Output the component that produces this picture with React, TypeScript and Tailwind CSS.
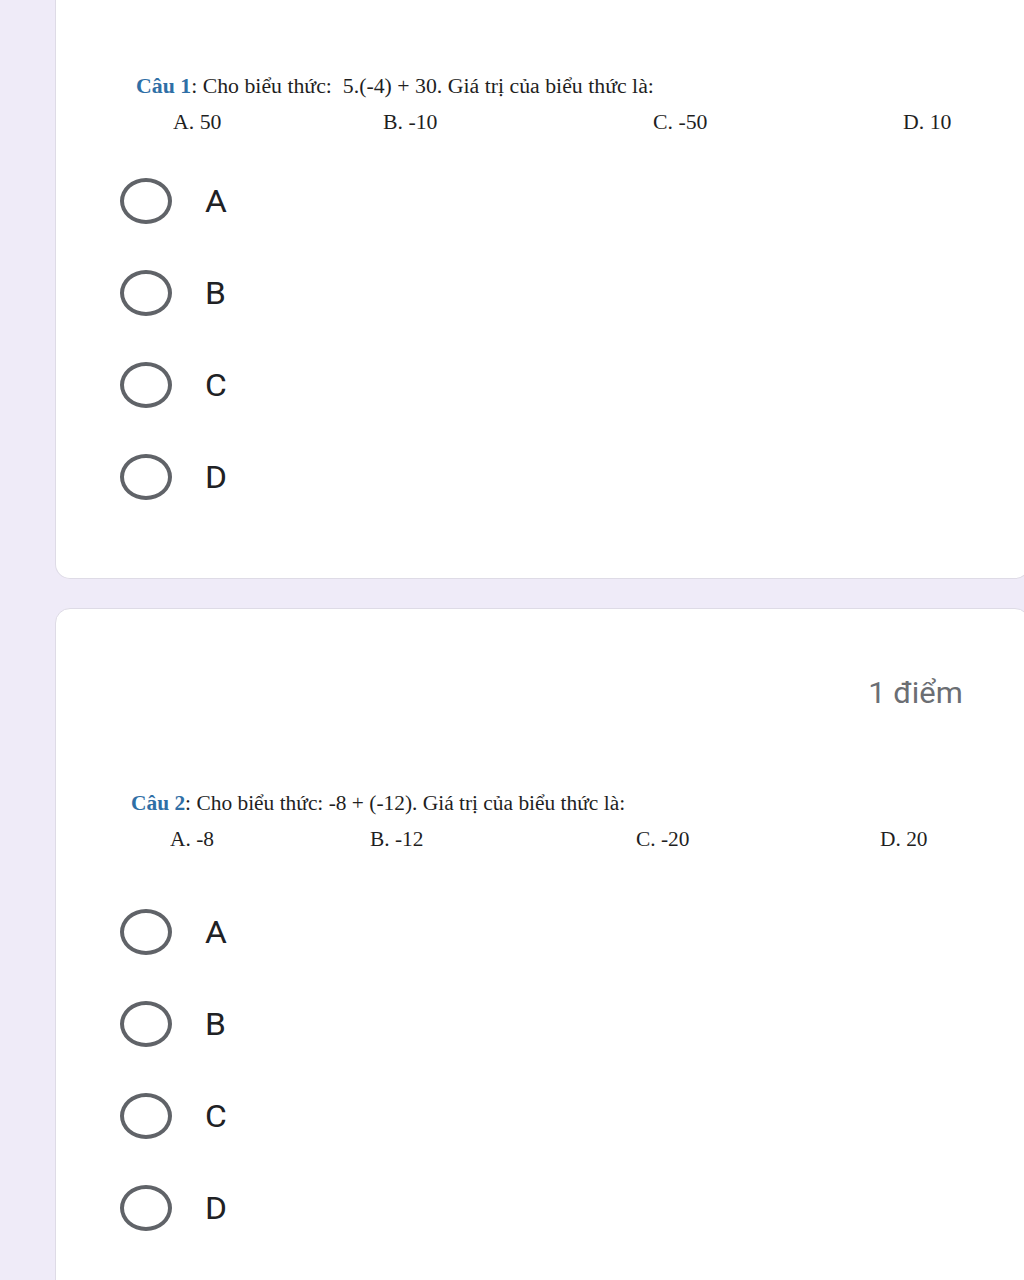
import React from "react";

const serif = "font-['Liberation_Serif','Times_New_Roman',serif]";

function Radio({ label }: { label: string }) {
  return (
    <div className="flex items-center h-[46px] pl-[64px]">
      <div className="w-[52px] h-[46px] rounded-[50%] border-[4px] border-[#606368] box-border" />
      <span className="ml-[33px] text-[31px] leading-none text-[#202124] font-['Roboto',sans-serif] origin-left scale-x-[1.08]">{label}</span>
    </div>
  );
}

export default function App() {
  return (
    <div className="w-[1024px] h-[1280px] overflow-hidden bg-[#efebf8]">
      {/* Card 1 */}
      <div className="ml-[55px] w-[975px] h-[579px] bg-white border border-t-0 border-[#dedbe6] rounded-b-[15px] flex flex-col">
        <div className={`pt-[76px] pl-[80px] h-[96px] text-[20px] leading-[20px] text-[#1f1f1f] ${serif} whitespace-nowrap`}>
          <div className="origin-left scale-x-[1.09]">
            <span className="font-bold text-[#2f6fa6]">Câu 1</span>: Cho biểu thức:&nbsp; 5.(-4) + 30. Giá trị của biểu thức là:
          </div>
        </div>
        <div className={`mt-[16px] flex pl-[117px] h-[20px] text-[20px] leading-[20px] text-[#1f1f1f] ${serif} whitespace-nowrap`}>
          <span className="w-[210px]"><span className="inline-block origin-left scale-x-[1.09]">A. 50</span></span>
          <span className="w-[270px]"><span className="inline-block origin-left scale-x-[1.09]">B. -10</span></span>
          <span className="w-[250px]"><span className="inline-block origin-left scale-x-[1.09]">C. -50</span></span>
          <span><span className="inline-block origin-left scale-x-[1.09]">D. 10</span></span>
        </div>
        <div className="mt-[46px] flex flex-col gap-[46px]">
          <Radio label="A" />
          <Radio label="B" />
          <Radio label="C" />
          <Radio label="D" />
        </div>
      </div>

      {/* Card 2 */}
      <div className="mt-[29px] ml-[55px] w-[975px] h-[700px] bg-white border border-[#dedbe6] rounded-t-[15px] flex flex-col">
        <div className="pt-[66px] pr-[66px] h-[102px] flex justify-end">
          <span className="text-[30px] leading-[36px] text-[#6b6e73] font-['Roboto',sans-serif] origin-right scale-x-[1.03]">1 điểm</span>
        </div>
        <div className={`mt-[82px] pl-[75px] h-[20px] text-[20px] leading-[20px] text-[#1f1f1f] ${serif} whitespace-nowrap`}>
          <div className="origin-left scale-x-[1.07]">
            <span className="font-bold text-[#2f6fa6]">Câu 2</span>: Cho biểu thức: -8 + (-12). Giá trị của biểu thức là:
          </div>
        </div>
        <div className={`mt-[16px] flex pl-[114px] h-[20px] text-[20px] leading-[20px] text-[#1f1f1f] ${serif} whitespace-nowrap`}>
          <span className="w-[200px]"><span className="inline-block origin-left scale-x-[1.07]">A. -8</span></span>
          <span className="w-[266px]"><span className="inline-block origin-left scale-x-[1.07]">B. -12</span></span>
          <span className="w-[244px]"><span className="inline-block origin-left scale-x-[1.07]">C. -20</span></span>
          <span><span className="inline-block origin-left scale-x-[1.07]">D. 20</span></span>
        </div>
        <div className="mt-[60px] flex flex-col gap-[46px]">
          <Radio label="A" />
          <Radio label="B" />
          <Radio label="C" />
          <Radio label="D" />
        </div>
      </div>
    </div>
  );
}
